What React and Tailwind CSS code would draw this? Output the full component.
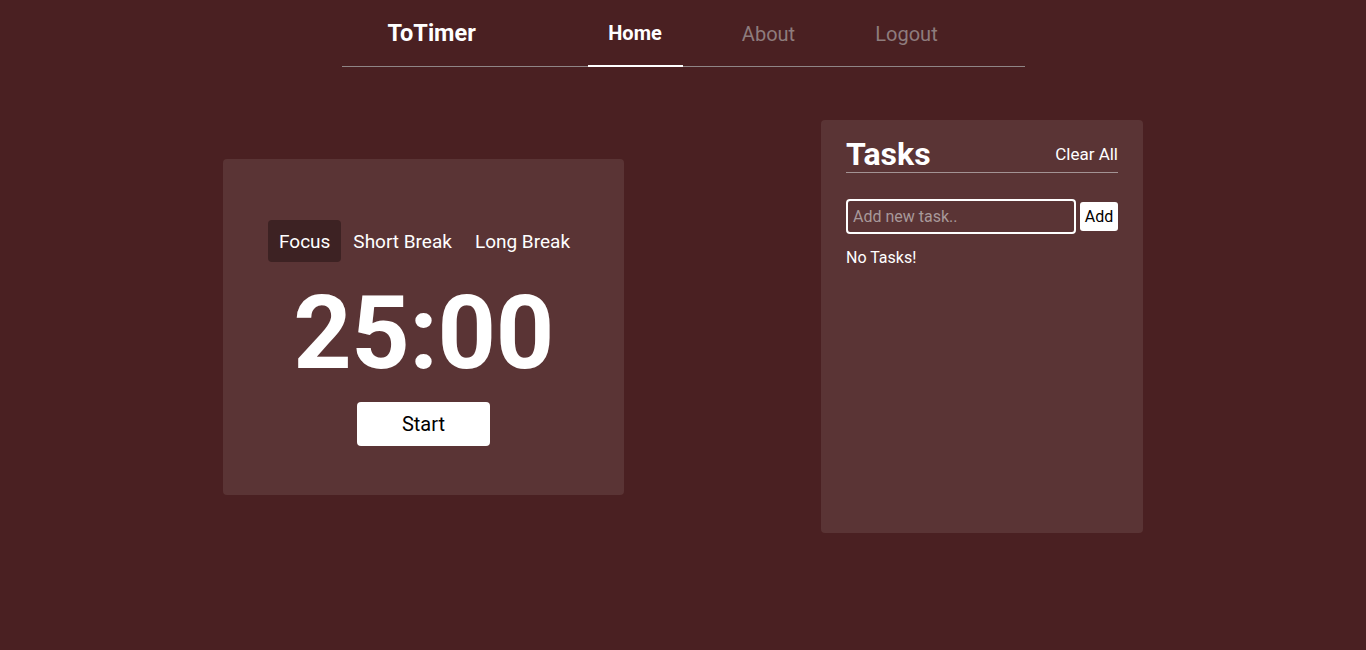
import React, { useState } from 'react';

export default function App() {
  const [mode, setMode] = useState('focus');
  const [task, setTask] = useState('');

  const modes = [
    { id: 'focus', label: 'Focus' },
    { id: 'short', label: 'Short Break' },
    { id: 'long', label: 'Long Break' },
  ];

  return (
    <div className="min-h-[650px] bg-[#4a2022] text-white font-['Roboto',sans-serif]">
      {/* nav */}
      <nav className="mx-auto w-[683px] h-[67px] flex items-stretch border-b border-[#8f8586]">
        <div className="w-[246px] flex items-center pl-[46px] text-[23.5px] font-bold pt-[1px]">ToTimer</div>
        <a className="w-[95px] flex items-center justify-center text-[20px] font-bold border-b-2 border-white -mb-px pt-[1px]">Home</a>
        <a className="w-[172px] flex items-center justify-center text-[20px] text-[#8e7c7d] pt-[1px]">About</a>
        <a className="w-[104px] flex items-center justify-center text-[20px] text-[#8e7c7d] pt-[1px]">Logout</a>
      </nav>

      <main className="flex justify-center items-center gap-[197px] pt-[53px]">
        {/* timer */}
        <div className="w-[401px] h-[336px] bg-[#5a3435] rounded-[4px] flex flex-col items-center pt-[61px]">
          <div className="flex items-center gap-[1px] pl-[2px]">
            {modes.map((m) => (
              <button
                key={m.id}
                onClick={() => setMode(m.id)}
                className={
                  'h-[42px] px-[11px] pt-[3px] rounded-[4px] text-[19px] ' +
                  (mode === m.id ? 'bg-[#3d2223]' : '')
                }
              >
                {m.label}
              </button>
            ))}
          </div>
          <div className="text-[102px] font-bold leading-none mt-[20px] tracking-[-0.5px]">25:00</div>
          <button className="mt-[18px] w-[133px] h-[44px] bg-white text-black rounded-[4px] text-[20px]">Start</button>
        </div>

        {/* tasks */}
        <div className="w-[322px] h-[413px] bg-[#5a3435] rounded-[4px] px-[25px] pt-[18px]">
          <div className="flex items-end justify-between border-b border-[#a39394] pb-[2px]">
            <h2 className="text-[32px] font-bold leading-none">Tasks</h2>
            <button className="text-[17px] leading-none mb-[7px]">Clear All</button>
          </div>
          <div className="flex items-center gap-[4px] mt-[26px]">
            <input
              value={task}
              onChange={(e) => setTask(e.target.value)}
              placeholder="Add new task.."
              className="w-[230px] h-[35px] bg-transparent border-2 border-white rounded-[4px] px-[5px] text-[16px] text-white placeholder:text-[#a8999a] outline-none"
            />
            <button className="w-[38px] h-[29px] bg-white text-black rounded-[3px] text-[16px]">Add</button>
          </div>
          <p className="mt-[12px] text-[16px]">No Tasks!</p>
        </div>
      </main>
    </div>
  );
}
